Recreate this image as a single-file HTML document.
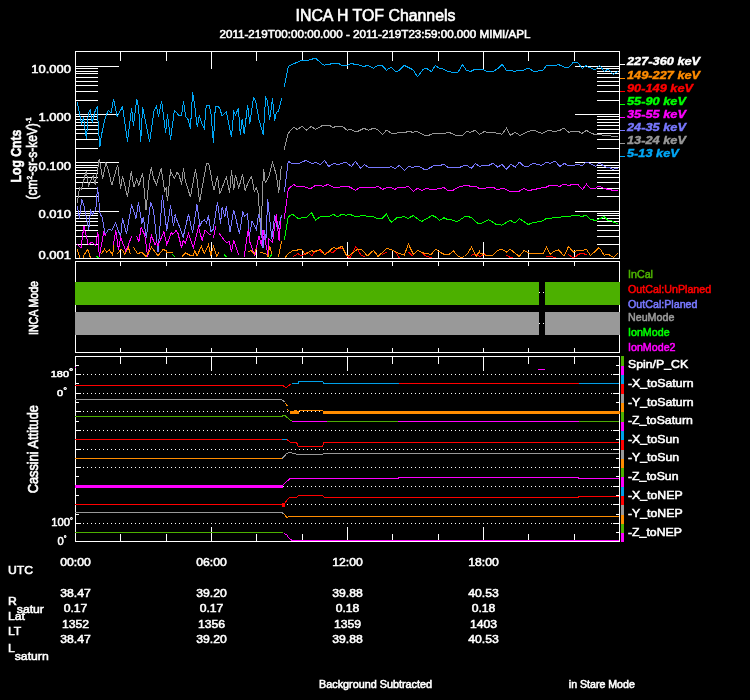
<!DOCTYPE html>
<html><head><meta charset="utf-8"><title>INCA H TOF Channels</title>
<style>
html,body{margin:0;padding:0;background:#000;}
svg{display:block;font-family:"Liberation Sans",sans-serif;will-change:transform;}
text{fill:#fff;stroke:#fff;stroke-width:0.55px;}
.l{fill:none;stroke-width:1;shape-rendering:crispEdges;}
.w{stroke:#fff;stroke-width:1;shape-rendering:crispEdges;fill:none;}
</style></head><body>
<svg width="750" height="700" viewBox="0 0 750 700">
<rect width="750" height="700" fill="#000"/>
<text x="375.5" y="20.7" text-anchor="middle" font-size="15.6" textLength="160" lengthAdjust="spacingAndGlyphs" style="stroke-width:0.6px">INCA H TOF Channels</text>
<text x="375" y="37.9" text-anchor="middle" font-size="10.8" textLength="311" lengthAdjust="spacingAndGlyphs">2011-219T00:00:00.000 - 2011-219T23:59:00.000 MIMI/APL</text>
<path class="w" d="M76 66.5H119M575 66.5H619M76 100.5H98M597 100.5H619M76 91.5H98M597 91.5H619M76 85.5H98M597 85.5H619M76 81.5H98M597 81.5H619M76 77.5H98M597 77.5H619M76 73.5H98M597 73.5H619M76 71.5H98M597 71.5H619M76 68.5H98M597 68.5H619M76 114.5H119M575 114.5H619M76 148.5H98M597 148.5H619M76 139.5H98M597 139.5H619M76 133.5H98M597 133.5H619M76 129.5H98M597 129.5H619M76 125.5H98M597 125.5H619M76 122.5H98M597 122.5H619M76 119.5H98M597 119.5H619M76 116.5H98M597 116.5H619M76 162.5H119M575 162.5H619M76 196.5H98M597 196.5H619M76 188.5H98M597 188.5H619M76 182.5H98M597 182.5H619M76 177.5H98M597 177.5H619M76 173.5H98M597 173.5H619M76 170.5H98M597 170.5H619M76 167.5H98M597 167.5H619M76 165.5H98M597 165.5H619M76 211.5H119M575 211.5H619M76 244.5H98M597 244.5H619M76 236.5H98M597 236.5H619M76 230.5H98M597 230.5H619M76 225.5H98M597 225.5H619M76 221.5H98M597 221.5H619M76 218.5H98M597 218.5H619M76 215.5H98M597 215.5H619M76 213.5H98M597 213.5H619M120.5 51V61M120.5 259V250M166.5 51V61M166.5 259V250M211.5 51V69M211.5 259V242M256.5 51V61M256.5 259V250M302.5 51V61M302.5 259V250M347.5 51V69M347.5 259V242M392.5 51V61M392.5 259V250M438.5 51V61M438.5 259V250M483.5 51V69M483.5 259V242M528.5 51V61M528.5 259V250M574.5 51V61M574.5 259V250"/>
<clipPath id="c1"><rect x="76" y="52" width="543" height="206"/></clipPath>
<g clip-path="url(#c1)">
<polyline class="l" stroke="#00a8f8" stroke-width="1" points="77.3,102.3 81.4,123.4 83.5,117.3 86.4,139.3 88.3,113.6 90.2,110.2 92.3,122.4 95.2,110.7 97.1,107.3 99.8,147.3 101.5,134.9 105.2,118.0 108.4,110.2 111.1,112.9 113.6,99.2 117.2,117.0 120.6,110.2 122.5,106.7 127.5,141.5 131.6,108.5 133.4,126.1 136.7,99.2 138.6,107.0 140.7,141.5 142.6,107.0 149.6,141.5 153.9,111.4 156.5,106.3 158.4,116.5 161.7,101.1 165.6,132.7 167.5,114.3 170.5,139.6 174.4,110.2 178.5,115.1 179.4,115.5 181.6,115.1 183.5,101.1 185.6,116.5 188.5,120.2 190.4,129.0 192.6,92.0 194.5,104.1 197.3,127.2 199.2,115.8 202.1,123.9 204.3,128.3 206.2,105.5 209.0,105.5 210.9,112.9 213.4,142.9 215.3,107.0 217.8,106.3 219.7,108.5 222.2,116.1 226.3,111.7 231.5,137.1 233.7,111.7 235.4,115.1 238.4,108.5 240.3,134.9 242.2,118.7 244.2,134.1 247.6,104.8 249.8,123.9 253.5,97.5 255.7,101.1 258.9,119.5 263.3,134.9 265.6,97.5 267.4,100.4 269.6,120.2 272.5,98.5 274.7,120.9 276.5,112.1 278.4,111.4 281.6,98.2"/>
<polyline class="l" stroke="#00a8f8" stroke-width="1" points="284.2,87.4 288.3,66.4 292.0,64.4 295.7,62.9 299.3,61.4 302.3,60.3 308.4,60.3 309.6,59.5 312.5,59.1 314.0,58.1 315.8,58.5 318.4,60.6 322.1,63.9 324.3,65.4 326.5,64.4 330.1,64.4 331.6,63.2 338.2,63.2 341.9,65.4 347.0,65.4 350.7,63.5 352.9,63.5 353.6,64.4 357.3,64.4 358.7,65.0 360.9,65.3 362.4,66.1 365.3,66.1 366.8,65.4 368.3,65.4 373.4,68.3 375.6,66.4 377.9,65.8 382.0,65.3 384.1,67.6 386.4,70.2 391.1,67.3 395.5,71.7 399.2,70.5 404.3,65.3 408.0,67.3 413.1,69.8 417.5,76.7 422.7,69.8 425.6,68.3 427.8,69.1 431.5,71.7 435.4,65.3 438.1,67.6 443.9,69.4 447.6,71.3 452.0,72.3 457.9,72.3 462.6,64.4 465.9,69.8 470.3,71.7 474.7,69.4 479.9,69.4 483.7,69.8 486.6,71.3 493.2,71.3 497.6,68.8 502.3,64.4 506.4,70.2 512.3,70.5 514.5,71.6 517.4,70.5 524.0,70.2 527.7,68.3 529.9,69.1 533.5,71.3 536.5,71.6 538.7,70.5 543.1,70.2 546.7,65.3 556.3,65.3 558.5,64.4 559.9,64.7 560.0,65.4 561.9,65.7 564.2,67.3 568.9,67.3 573.5,62.1 577.3,62.1 582.4,68.5 586.4,65.4 588.9,67.5 592.2,68.5 594.1,69.6 595.9,69.4 599.7,65.4 604.3,71.5 605.7,70.3 608.1,69.4 613.4,74.5 616.0,72.4 618.3,71.7"/>
<polyline class="l" stroke="#989898" stroke-width="1" points="77.3,202.8 79.5,187.4 81.4,189.6 83.5,181.5 86.1,171.3 88.8,185.9 91.3,179.3 93.2,176.1 95.2,184.5 97.1,172.3 99.3,158.8 102.6,178.6 105.9,162.5 108.4,169.8 111.8,185.2 114.7,174.9 117.7,164.7 120.6,188.9 122.5,175.7 127.5,196.9 131.3,171.3 133.8,187.4 136.7,179.3 138.9,185.2 142.6,172.7 146.0,210.1 149.2,177.9 151.4,167.6 153.6,178.6 156.5,184.5 161.2,168.3 164.6,191.1 166.1,188.1 167.5,201.3 170.5,170.5 174.1,178.6 177.8,172.0 176.5,172.0 178.7,173.5 181.6,184.5 183.5,168.3 185.3,180.8 190.4,196.9 195.5,169.1 197.0,179.3 199.6,202.1 206.5,163.2 208.7,163.5 213.9,190.3 217.5,175.7 219.7,194.0 226.3,177.1 229.6,192.5 231.5,170.5 233.7,190.3 235.4,174.9 238.8,188.1 242.5,174.2 245.1,190.3 248.3,182.3 251.6,176.4 254.2,191.1 256.4,188.1 258.3,194.0 260.8,235.4 263.0,181.5 263.7,169.1 265.2,183.0 268.9,176.4 272.5,162.5 276.2,174.2 278.8,192.5 281.3,166.1"/>
<polyline class="l" stroke="#989898" stroke-width="1" points="284.2,149.6 288.3,133.2 293.5,127.3 297.1,129.4 302.3,126.4 306.4,130.2 311.4,126.4 315.5,129.4 322.8,125.3 329.4,125.3 333.1,127.6 336.0,126.4 342.6,126.4 347.0,130.2 350.7,129.4 355.1,131.6 358.0,131.3 363.9,128.3 368.3,130.2 373.4,128.3 377.1,129.4 377.6,129.4 382.6,134.6 386.4,130.2 391.9,133.5 396.3,133.5 398.5,132.3 405.8,132.3 408.0,131.3 410.2,131.6 412.4,132.3 416.8,131.3 424.9,135.5 428.5,135.5 433.7,133.2 445.4,133.2 447.6,132.3 449.8,132.6 455.7,135.5 462.7,135.5 466.7,131.6 470.3,132.3 475.5,130.2 479.4,134.2 484.4,131.6 486.6,132.3 493.9,132.3 496.9,133.5 502.0,134.2 506.4,128.3 510.4,135.2 515.2,132.3 519.9,135.5 527.7,131.6 533.5,130.2 542.3,133.5 548.9,130.2 554.8,131.6 559.9,130.2 560.0,130.3 563.7,128.2 568.9,132.4 571.2,131.5 578.7,131.5 581.9,133.5 586.4,130.3 589.4,132.4 592.2,133.3 594.5,134.5 601.5,134.5 602.5,135.4 610.4,135.4 611.3,136.4 617.9,136.4"/>
<polyline class="l" stroke="#7878ff" stroke-width="1" points="77.3,206.0 79.5,218.5 81.7,199.4 83.9,205.3 88.8,229.5 90.5,210.4 92.3,214.1 95.7,210.4 97.6,187.4 100.1,214.1 102.3,217.7 105.2,234.6 108.4,229.5 111.8,230.2 115.5,222.9 120.6,236.8 122.5,217.7 126.5,233.9 131.6,204.5 136.0,218.5 138.5,202.3 141.9,223.6 143.3,217.0 146.3,237.5 150.7,201.6 153.6,211.1 158.0,252.2 162.4,195.0 166.8,230.9 170.5,205.3 173.4,225.8 175.6,214.1 175.0,215.5 179.4,226.5 183.1,237.5 188.5,214.1 192.6,233.1 197.0,204.5 199.9,225.8 202.1,221.4 204.3,219.9 206.5,222.9 208.4,215.5 210.9,231.7 213.1,229.5 217.5,202.3 220.5,223.6 222.2,206.7 224.9,217.0 226.3,206.0 230.0,231.7 233.7,209.7 239.5,233.9 242.8,211.9 244.7,216.3 247.6,213.3 249.1,236.8 252.0,221.4 256.4,229.5 258.6,214.1 260.1,218.5 263.0,247.8 264.5,230.2 265.9,240.5 267.7,199.4 271.8,239.0 274.7,215.5 277.7,230.2 279.9,221.4 281.6,215.5"/>
<polyline class="l" stroke="#7878ff" stroke-width="1" points="284.4,191.7 288.3,161.3 292.0,163.5 299.3,163.5 305.9,160.3 311.8,163.5 315.5,162.5 320.6,164.6 324.6,160.3 328.7,166.5 333.8,163.5 338.2,164.6 345.5,162.1 351.4,166.5 355.4,161.3 360.6,168.4 364.6,164.6 368.6,167.5 388.9,167.5 391.1,166.2 394.8,168.7 399.2,165.4 404.3,170.4 408.7,166.2 412.4,167.5 416.8,166.2 419.0,166.5 424.1,169.4 427.1,169.4 434.4,165.4 440.3,165.4 443.9,164.3 448.3,167.5 459.3,167.5 464.5,165.4 466.7,165.4 471.4,168.4 475.5,163.5 479.4,166.5 482.2,165.4 488.8,165.4 493.2,163.1 497.6,167.2 502.0,164.3 506.4,169.4 510.8,164.3 515.2,167.2 519.3,162.1 524.0,166.2 528.4,166.2 533.5,163.1 537.2,164.3 541.6,165.4 546.7,162.1 550.4,163.5 555.1,161.0 559.9,166.5 561.9,165.1 564.5,163.4 567.5,165.5 574.5,165.5 575.4,164.4 579.6,164.4 580.5,165.5 582.4,165.5 584.7,163.2 587.1,162.5 589.9,163.4 592.2,164.4 595.5,166.5 597.3,164.4 599.7,163.4 601.5,164.4 603.4,165.5 604.8,166.5 606.7,167.4 609.5,167.4 610.9,168.3 613.2,169.5 616.0,168.3 617.9,168.3"/>
<polyline class="l" stroke="#ff00ff" stroke-width="1" points="77.3,244.1 81.0,247.8 83.9,225.8 88.3,244.9 92.0,241.9 95.7,245.6 97.9,231.7 99.3,256.6 103.7,232.4 105.9,236.1"/>
<polyline class="l" stroke="#ff00ff" stroke-width="1" points="113.3,244.9 115.8,230.2 118.4,250.0 120.6,237.5 125.7,250.7 127.9,246.3 131.6,236.1"/>
<polyline class="l" stroke="#ff00ff" stroke-width="1" points="136.7,236.1 138.9,241.9 141.1,227.3 144.8,235.3 147.7,256.6 151.4,235.3 155.1,244.9 156.5,241.9 158.0,245.6 163.9,231.7 166.8,244.9 171.2,232.4 172.7,234.6 176.3,230.2 175.0,230.2 177.9,233.1 181.6,247.8 183.1,240.5 185.3,242.7 188.5,233.9 193.3,247.8 198.5,227.3 202.1,240.5 205.1,230.2 209.5,234.6 210.9,233.9"/>
<polyline class="l" stroke="#ff00ff" stroke-width="1" points="213.4,237.5 215.8,226.5"/>
<polyline class="l" stroke="#ff00ff" stroke-width="1" points="219.0,233.1 226.3,242.7 229.3,241.2 231.5,252.2 233.7,239.7 238.8,255.1"/>
<polyline class="l" stroke="#ff00ff" stroke-width="1" points="244.2,256.6 248.3,228.7 249.8,241.9 254.9,255.9 258.9,236.1 261.5,245.6 263.0,230.2 268.1,255.9 268.9,239.0 272.5,242.7 276.2,214.1 279.1,240.5 280.6,220.7"/>
<polyline class="l" stroke="#ff00ff" stroke-width="1" points="284.2,219.1 288.3,189.1 293.5,184.4 296.4,186.4 303.7,186.4 310.3,188.8 315.5,185.4 320.6,185.4 323.5,186.4 327.9,184.4 333.8,187.6 338.9,187.6 341.1,186.4 348.5,186.4 355.4,190.2 360.6,187.3 374.9,187.3 377.8,186.4 377.9,186.4 382.6,189.4 386.7,187.6 390.4,187.3 394.8,189.4 398.5,187.3 405.1,187.3 408.0,186.1 413.4,191.3 417.5,188.3 421.9,190.5 426.3,188.3 430.0,189.4 435.9,189.4 438.1,188.3 441.0,188.3 443.6,187.3 447.6,190.2 452.7,190.5 457.9,187.3 461.5,186.4 465.2,185.3 468.1,185.3 470.3,186.4 475.5,186.4 479.1,188.3 485.1,188.3 487.3,187.3 493.2,187.3 496.9,189.4 499.1,189.4 501.3,188.3 503.5,188.3 509.3,191.3 518.9,191.3 524.0,188.3 527.7,190.5 530.6,190.5 532.8,189.4 535.7,189.4 537.9,188.3 540.1,188.3 542.3,187.3 546.0,187.3 549.7,185.3 556.3,185.3 558.5,186.1 559.9,186.1 560.0,186.3 563.4,184.2 566.1,184.2 567.5,185.2 570.2,185.2 572.2,184.2 577.6,184.2 582.4,189.7 586.5,184.2 590.5,188.3 595.5,188.3 597.3,187.0 600.0,186.3 603.4,188.3 606.1,188.3 606.8,189.3 610.9,189.3 611.6,190.3 617.7,190.3"/>
<polyline class="l" stroke="#00ff00" stroke-width="1" points="96.4,255.9 98.6,258.1"/>
<polyline class="l" stroke="#00ff00" stroke-width="1" points="141.9,252.9 145.5,255.1"/>
<polyline class="l" stroke="#00ff00" stroke-width="1" points="171.9,253.7 174.9,256.6"/>
<polyline class="l" stroke="#00ff00" stroke-width="1" points="224.1,254.8 226.6,257.3"/>
<polyline class="l" stroke="#00ff00" stroke-width="1" points="268.9,258.1 272.1,254.4"/>
<polyline class="l" stroke="#00ff00" stroke-width="1" points="284.2,240.4 288.3,216.6 292.7,214.3 297.9,218.4 306.7,217.2 311.5,212.5 315.5,220.3 320.6,216.6 329.4,216.6 333.1,214.3 337.5,216.6 341.9,214.3 346.3,215.2 349.9,214.3 355.1,216.6 358.0,216.6 360.2,215.8 365.3,215.8 367.5,216.6 373.4,216.6 377.1,218.4 382.3,218.4 386.4,214.3 391.1,222.4 397.0,217.7 400.7,217.7 403.6,216.2 408.0,218.4 413.4,215.5 419.0,219.9 421.9,221.3 432.2,215.5 435.1,216.6 439.5,220.3 443.9,217.7 447.6,219.6 451.3,219.6 455.7,221.3 457.9,221.3 464.5,216.9 468.1,216.6 471.8,217.7 475.5,221.6 478.4,223.5 481.3,223.5 483.5,222.4 482.2,223.1 488.5,219.6 496.1,224.3 499.1,224.3 501.7,225.4 510.1,220.3 515.2,223.1 519.3,218.4 528.4,224.6 533.5,222.1 536.5,222.1 538.7,221.3 541.6,221.3 546.7,218.4 550.4,218.4 554.1,217.2 559.9,217.2 560.0,217.5 562.7,216.5 570.2,216.5 572.2,215.4 579.0,215.4 580.3,216.5 583.1,216.5 584.4,215.4 586.5,215.4 590.5,219.5 593.2,219.5 593.9,220.5 596.6,220.5 598.0,219.5 600.7,218.4 604.1,216.5 608.2,220.5 610.9,220.5 614.3,222.5 617.7,223.6"/>
<polyline class="l" stroke="#ff0000" stroke-width="1" points="293.5,256.5 297.9,253.6 301.5,255.8 305.2,253.6 308.1,252.1 311.8,255.8 315.5,250.4 319.9,250.4 324.3,254.3 329.4,251.1 332.3,252.9 337.5,248.5 342.6,248.5 346.3,254.3 349.9,258.7 355.8,246.3 358.0,249.9 360.9,255.1 364.6,256.5"/>
<polyline class="l" stroke="#ff0000" stroke-width="1" points="381.6,255.1 386.4,252.1"/>
<polyline class="l" stroke="#ff0000" stroke-width="1" points="394.8,250.4 399.2,257.7"/>
<polyline class="l" stroke="#ff0000" stroke-width="1" points="408.4,252.1 413.4,256.5"/>
<polyline class="l" stroke="#ff0000" stroke-width="1" points="421.9,252.9 425.6,255.8 431.5,257.7"/>
<polyline class="l" stroke="#ff0000" stroke-width="1" points="471.1,255.1 475.5,254.3 479.9,256.5 485.0,254.3 484.1,253.6"/>
<polyline class="l" stroke="#ff0000" stroke-width="1" points="506.4,255.1 510.1,257.3 515.2,258.4"/>
<polyline class="l" stroke="#ff0000" stroke-width="1" points="546.0,256.2 551.9,256.5 555.5,257.7"/>
<polyline class="l" stroke="#ff0000" stroke-width="1" points="568.0,254.3 573.9,258.0 577.5,255.1 581.2,253.6 586.6,254.3"/>
<polyline class="l" stroke="#ff0000" stroke-width="1" points="568.1,254.1 573.6,258.2 577.6,254.4 581.7,253.4 586.5,254.4"/>
<polyline class="l" stroke="#ff8c00" stroke-width="1" points="77.3,249.3 80.0,258.4"/>
<polyline class="l" stroke="#ff8c00" stroke-width="1" points="83.5,258.4 83.9,255.1 87.9,249.3 90.5,258.1"/>
<polyline class="l" stroke="#ff8c00" stroke-width="1" points="101.5,253.7 104.5,249.3 106.7,252.2 109.6,250.0 112.5,255.1 114.0,244.9"/>
<polyline class="l" stroke="#ff8c00" stroke-width="1" points="117.7,253.7 120.6,249.3 122.8,250.7 125.0,254.4 128.4,247.1 130.1,253.7"/>
<polyline class="l" stroke="#ff8c00" stroke-width="1" points="133.4,247.1 137.5,253.7 141.9,252.2 146.3,256.6 151.4,247.1 158.0,255.9 163.1,249.3 166.1,250.7 166.8,252.2 172.7,252.2"/>
<polyline class="l" stroke="#ff8c00" stroke-width="1" points="181.6,257.3 185.3,252.9 189.7,255.1 193.3,255.1 194.8,250.7 197.0,255.9 201.4,246.3 204.3,253.7 208.4,244.9 210.9,255.1 213.4,246.3 216.8,256.6 219.0,252.2"/>
<polyline class="l" stroke="#ff8c00" stroke-width="1" points="247.6,251.5 251.3,250.7 254.2,254.4 256.4,247.8"/>
<polyline class="l" stroke="#ff8c00" stroke-width="1" points="260.1,252.2 265.9,253.7 268.1,256.6 269.6,245.6 271.8,253.7"/>
<polyline class="l" stroke="#ff8c00" stroke-width="1" points="278.4,257.3 281.6,241.2"/>
<polyline class="l" stroke="#ff8c00" stroke-width="1" points="284.2,258.7 288.3,253.6 292.0,251.1 301.5,249.2 305.2,254.3 311.8,250.4 314.0,252.1 320.6,249.2 325.0,255.1 329.4,251.1 333.8,247.0 336.0,249.2 341.9,246.3 346.3,255.1 349.9,255.1 356.5,249.9 361.7,249.9 367.5,255.8 373.4,250.4 378.5,256.5 377.9,256.5 386.7,248.5 390.4,249.2 399.2,253.6 404.3,255.1 408.4,244.1 413.4,254.3 417.5,250.4 424.9,253.6 431.5,254.3 435.4,249.2 442.5,253.6 445.4,254.8 448.3,254.8 453.5,251.1 458.6,256.5 461.5,257.7 464.5,256.5 468.1,252.9 471.5,247.0 476.2,256.5 479.4,251.1 480.0,252.9 485.1,255.1 493.2,255.1 497.6,250.4 502.0,249.2 506.4,252.1 510.1,249.2 519.3,256.5 524.0,250.4 528.4,252.9 531.3,253.6 543.1,253.6 546.4,247.0 550.4,254.3 554.1,251.4 558.5,249.9 560.0,251.4 564.1,256.1 568.4,246.6 573.6,252.1 576.3,250.7 583.7,250.7 584.4,249.4 586.5,249.4 590.5,255.5 598.7,248.0 600.0,248.7 604.1,255.2 608.2,254.1 613.6,257.5 617.7,253.2"/>
</g>
<rect class="w" x="75.5" y="51.5" width="544" height="207"/>
<text transform="translate(71,73) scale(1.12,1.0)" font-size="11.6" text-anchor="end">10.000</text>
<text transform="translate(71,121.4) scale(1.12,1.0)" font-size="11.6" text-anchor="end">1.000</text>
<text transform="translate(71,170) scale(1.12,1.0)" font-size="11.6" text-anchor="end">0.100</text>
<text transform="translate(71,218) scale(1.12,1.0)" font-size="11.6" text-anchor="end">0.010</text>
<text transform="translate(71,259) scale(1.12,1.0)" font-size="11.6" text-anchor="end">0.001</text>
<text transform="translate(20.9,156.1) rotate(-90) scale(1.0,1.17)" font-size="12.2" text-anchor="middle" font-weight="bold" style="stroke-width:0.5px">Log Cnts</text>
<text transform="translate(37.1,199.4) rotate(-90) scale(1.0,1.17)" font-size="12">(cm<tspan font-size="6.5" dy="-4.5">2</tspan><tspan dy="4.5">-sr-s-keV)</tspan><tspan font-size="6.5" dy="-5.5">-1</tspan></text>
<line class="l" x1="620" y1="64.5" x2="625" y2="64.5" stroke="#ffffff"/>
<text transform="translate(627,64.7) scale(1.195,1.0)" font-size="10.7" font-weight="bold" font-style="italic" style="fill:#ffffff;stroke:#ffffff;stroke-width:0.4px">227-360 keV</text>
<line class="l" x1="620" y1="78.5" x2="625" y2="78.5" stroke="#ff8c00"/>
<text transform="translate(627,78.7) scale(1.195,1.0)" font-size="10.7" font-weight="bold" font-style="italic" style="fill:#ff8c00;stroke:#ff8c00;stroke-width:0.4px">149-227 keV</text>
<line class="l" x1="620" y1="91.5" x2="625" y2="91.5" stroke="#ff0000"/>
<text transform="translate(627,91.7) scale(1.195,1.0)" font-size="10.7" font-weight="bold" font-style="italic" style="fill:#ff0000;stroke:#ff0000;stroke-width:0.4px">90-149 keV</text>
<line class="l" x1="620" y1="104.5" x2="625" y2="104.5" stroke="#00ff00"/>
<text transform="translate(627,104.7) scale(1.195,1.0)" font-size="10.7" font-weight="bold" font-style="italic" style="fill:#00ff00;stroke:#00ff00;stroke-width:0.4px">55-90 keV</text>
<line class="l" x1="620" y1="117.5" x2="625" y2="117.5" stroke="#ff00ff"/>
<text transform="translate(627,117.7) scale(1.195,1.0)" font-size="10.7" font-weight="bold" font-style="italic" style="fill:#ff00ff;stroke:#ff00ff;stroke-width:0.4px">35-55 keV</text>
<line class="l" x1="620" y1="130.5" x2="625" y2="130.5" stroke="#7878ff"/>
<text transform="translate(627,130.7) scale(1.195,1.0)" font-size="10.7" font-weight="bold" font-style="italic" style="fill:#7878ff;stroke:#7878ff;stroke-width:0.4px">24-35 keV</text>
<line class="l" x1="620" y1="143.5" x2="625" y2="143.5" stroke="#989898"/>
<text transform="translate(627,143.7) scale(1.195,1.0)" font-size="10.7" font-weight="bold" font-style="italic" style="fill:#989898;stroke:#989898;stroke-width:0.4px">13-24 keV</text>
<line class="l" x1="620" y1="156.5" x2="625" y2="156.5" stroke="#00a8f8"/>
<text transform="translate(627,156.7) scale(1.195,1.0)" font-size="10.7" font-weight="bold" font-style="italic" style="fill:#00a8f8;stroke:#00a8f8;stroke-width:0.4px">5-13 keV</text>
<path class="w" d="M120.5 261V266M120.5 353V348M166.5 261V266M166.5 353V348M211.5 261V266M211.5 353V348M256.5 261V266M256.5 353V348M302.5 261V266M302.5 353V348M347.5 261V266M347.5 353V348M392.5 261V266M392.5 353V348M438.5 261V266M438.5 353V348M483.5 261V266M483.5 353V348M528.5 261V266M528.5 353V348M574.5 261V266M574.5 353V348"/>
<rect class="w" x="75.5" y="261.5" width="544" height="91"/>
<rect x="75" y="282" width="464" height="23" fill="#4cb000" shape-rendering="crispEdges"/><rect x="545" y="282" width="75" height="23" fill="#4cb000" shape-rendering="crispEdges"/>
<rect x="75" y="312" width="464" height="23" fill="#999999" shape-rendering="crispEdges"/><rect x="545" y="312" width="75" height="23" fill="#999999" shape-rendering="crispEdges"/>
<path fill="#fff" shape-rendering="crispEdges" d="M539 292h1v1h-1zM543 292h1v1h-1zM539 323h1v1h-1zM543 323h1v1h-1z"/>
<text transform="translate(38.3,308) rotate(-90) scale(1.0,1.18)" font-size="10.56" text-anchor="middle">INCA Mode</text>
<text x="628" y="277.8" font-size="10.7" style="fill:#4cb000;stroke:#4cb000">InCal</text>
<text x="628" y="292.8" font-size="10.7" style="fill:#ff0000;stroke:#ff0000">OutCal:UnPlaned</text>
<text x="628" y="308.1" font-size="10.7" style="fill:#7878ff;stroke:#7878ff">OutCal:Planed</text>
<text x="628" y="320.5" font-size="10.7" style="fill:#999999;stroke:#999999">NeuMode</text>
<text x="628" y="335.6" font-size="10.7" style="fill:#00ff00;stroke:#00ff00">IonMode</text>
<text x="628" y="350.8" font-size="10.7" style="fill:#ff00ff;stroke:#ff00ff">IonMode2</text>
<path class="w" d="M120.5 356V364M120.5 542V534M166.5 356V364M166.5 542V534M211.5 356V371M211.5 542V527M256.5 356V364M256.5 542V534M302.5 356V364M302.5 542V534M347.5 356V371M347.5 542V527M392.5 356V364M392.5 542V534M438.5 356V364M438.5 542V534M483.5 356V371M483.5 542V527M528.5 356V364M528.5 542V534M574.5 356V364M574.5 542V534M76 374.5H81M613 374.5H619M76 393.5H81M613 393.5H619M76 411.5H81M613 411.5H619M76 430.5H81M613 430.5H619M76 449.5H81M613 449.5H619M76 467.5H81M613 467.5H619M76 486.5H81M613 486.5H619M76 504.5H81M613 504.5H619M76 523.5H81M613 523.5H619M76 365.5H79M616 365.5H619M76 383.5H79M616 383.5H619M76 402.5H79M616 402.5H619M76 421.5H79M616 421.5H619M76 439.5H79M616 439.5H619M76 458.5H79M616 458.5H619M76 476.5H79M616 476.5H619M76 495.5H79M616 495.5H619M76 514.5H79M616 514.5H619M76 532.5H79M616 532.5H619"/>
<line class="w" x1="83" y1="374.5" x2="612" y2="374.5" stroke-dasharray="1 3"/><line class="w" x1="83" y1="393.5" x2="612" y2="393.5" stroke-dasharray="1 3"/><line class="w" x1="83" y1="411.5" x2="612" y2="411.5" stroke-dasharray="1 3"/><line class="w" x1="83" y1="430.5" x2="612" y2="430.5" stroke-dasharray="1 3"/><line class="w" x1="83" y1="449.5" x2="612" y2="449.5" stroke-dasharray="1 3"/><line class="w" x1="83" y1="467.5" x2="612" y2="467.5" stroke-dasharray="1 3"/><line class="w" x1="83" y1="486.5" x2="612" y2="486.5" stroke-dasharray="1 3"/><line class="w" x1="83" y1="504.5" x2="612" y2="504.5" stroke-dasharray="1 3"/><line class="w" x1="83" y1="523.5" x2="612" y2="523.5" stroke-dasharray="1 3"/>
<rect class="w" x="75.5" y="356.5" width="544" height="185"/>
<rect x="75" y="367" width="1" height="1" fill="#ff00ff"/><polyline class="l" stroke="#ff00ff" stroke-width="1" points="538,369.5 545,369.5"/>
<polyline class="l" stroke="#ff0000" stroke-width="1" points="75,385.5 282.8,385.5 286,387.5 290.8,384.2"/>
<polyline class="l" stroke="#00a0e8" stroke-width="1" points="292,383.5 298.3,383.5 299,381.5 322.5,381.5 323.7,383.5 399,383.5"/>
<polyline class="l" stroke="#ff0000" stroke-width="1" points="399,383.5 579,383.5"/>
<polyline class="l" stroke="#00a0e8" stroke-width="1" points="579,383.5 619,383.5"/>
<polyline class="l" stroke="#999999" stroke-width="1" points="75,399.5 281.4,399.5 284.8,402"/>
<polyline class="l" stroke="#ff8c00" stroke-width="1" points="285.2,403.1 287.7,406.3"/>
<polyline class="l" stroke="#ff8c00" stroke-width="1" points="287.3,409.6 289.2,410.4"/>
<rect x="290" y="411" width="9" height="3" fill="#ff8c00" shape-rendering="crispEdges"/><rect x="294" y="410" width="3" height="1" fill="#ff8c00" shape-rendering="crispEdges"/><polyline class="l" stroke="#ff8c00" stroke-width="1" points="298.7,410.5 323,410.5"/>
<rect x="323" y="411" width="297" height="3" fill="#ff8c00" shape-rendering="crispEdges"/>
<polyline class="l" stroke="#4cb000" stroke-width="1" points="75,416.5 281.9,416.5 283.3,415.3 285.5,416 291.4,421"/>
<polyline class="l" stroke="#ff00ff" stroke-width="1" points="292,421.5 327,421.5"/>
<polyline class="l" stroke="#4cb000" stroke-width="1" points="327,421.5 398,421.5"/>
<polyline class="l" stroke="#ff00ff" stroke-width="1" points="398,421.5 579,421.5"/>
<polyline class="l" stroke="#4cb000" stroke-width="1" points="579,421.5 619,421.5"/>
<polyline class="l" stroke="#ff0000" stroke-width="1" points="75,439.5 281.9,439.5"/>
<polyline class="l" stroke="#00a0e8" stroke-width="1" points="281.9,439.5 287,439.5"/>
<polyline class="l" stroke="#ff0000" stroke-width="1" points="287,439.5 290.7,442.5 296.5,442.5 298.4,446.5 322.5,446.5 323.7,442.5 619,442.5"/>
<polyline class="l" stroke="#ff8c00" stroke-width="1" points="75,458.5 282.3,458.5"/>
<polyline class="l" stroke="#999999" stroke-width="1" points="282.3,458.5 287,453.1 290.7,452.6 296.5,454.1 298.4,454.5 322.5,454.5 323.7,453.5 619,453.5"/>
<rect x="75" y="485" width="208" height="3" fill="#ff00ff" shape-rendering="crispEdges"/><polyline class="l" stroke="#ff00ff" stroke-width="1" points="282.9,485.3 289.9,478.5 398.8,478.5 398.8,477.5 578,477.5 578,478.5 619,478.5"/>
<polyline class="l" stroke="#ff0000" stroke-width="1" points="75,504.5 282.3,504.5"/>
<rect x="282" y="503" width="3" height="4" fill="#ff0000" shape-rendering="crispEdges"/><polyline class="l" stroke="#ff0000" stroke-width="1" points="284.8,503 288.5,498.1 296.5,497.3 298.4,495.5 322.5,495.5 324.4,497.5 578,497.5 578,496.5 619,496.5"/>
<polyline class="l" stroke="#999999" stroke-width="1" points="75,512.5 281.9,512.5 283.8,513.9"/>
<polyline class="l" stroke="#ff8c00" stroke-width="1" points="283.8,513.9 287,517.6 289.2,516.5 619,516.5"/>
<polyline class="l" stroke="#4cb000" stroke-width="1" points="75,532.5 282.9,532.5"/>
<polyline class="l" stroke="#ff00ff" stroke-width="1.3" points="283.8,533 287,535.2 288.5,537.7 292.1,540.5 619,540.5"/>
<rect x="621" y="356.0" width="3" height="10.0" fill="#4cb000" shape-rendering="crispEdges"/><rect x="621" y="366.0" width="3" height="9.0" fill="#ff00ff" shape-rendering="crispEdges"/><rect x="621" y="375.0" width="3" height="9.0" fill="#00a0e8" shape-rendering="crispEdges"/><rect x="621" y="384.0" width="3" height="10.0" fill="#ff0000" shape-rendering="crispEdges"/><rect x="621" y="394.0" width="3" height="9.0" fill="#999999" shape-rendering="crispEdges"/><rect x="621" y="403.0" width="3" height="9.0" fill="#ff8c00" shape-rendering="crispEdges"/><rect x="621" y="412.0" width="3" height="10.0" fill="#4cb000" shape-rendering="crispEdges"/><rect x="621" y="422.0" width="3" height="9.0" fill="#ff00ff" shape-rendering="crispEdges"/><rect x="621" y="431.0" width="3" height="9.0" fill="#00a0e8" shape-rendering="crispEdges"/><rect x="621" y="440.0" width="3" height="10.0" fill="#ff0000" shape-rendering="crispEdges"/><rect x="621" y="450.0" width="3" height="9.0" fill="#999999" shape-rendering="crispEdges"/><rect x="621" y="459.0" width="3" height="9.0" fill="#ff8c00" shape-rendering="crispEdges"/><rect x="621" y="468.0" width="3" height="9.0" fill="#4cb000" shape-rendering="crispEdges"/><rect x="621" y="477.0" width="3" height="10.0" fill="#ff00ff" shape-rendering="crispEdges"/><rect x="621" y="487.0" width="3" height="9.0" fill="#00a0e8" shape-rendering="crispEdges"/><rect x="621" y="496.0" width="3" height="9.0" fill="#ff0000" shape-rendering="crispEdges"/><rect x="621" y="505.0" width="3" height="10.0" fill="#999999" shape-rendering="crispEdges"/><rect x="621" y="515.0" width="3" height="9.0" fill="#ff8c00" shape-rendering="crispEdges"/><rect x="621" y="524.0" width="3" height="9.0" fill="#4cb000" shape-rendering="crispEdges"/><rect x="621" y="533.0" width="3" height="9.0" fill="#ff00ff" shape-rendering="crispEdges"/>
<text transform="translate(628,368.4) scale(1.06,1.0)" font-size="11.6">Spin/P_CK</text>
<text transform="translate(628,387.0) scale(1.06,1.0)" font-size="11.6">-X_toSaturn</text>
<text transform="translate(628,405.6) scale(1.06,1.0)" font-size="11.6">-Y_toSaturn</text>
<text transform="translate(628,424.2) scale(1.06,1.0)" font-size="11.6">-Z_toSaturn</text>
<text transform="translate(628,442.8) scale(1.06,1.0)" font-size="11.6">-X_toSun</text>
<text transform="translate(628,461.4) scale(1.06,1.0)" font-size="11.6">-Y_toSun</text>
<text transform="translate(628,480.0) scale(1.06,1.0)" font-size="11.6">-Z_toSun</text>
<text transform="translate(628,498.6) scale(1.06,1.0)" font-size="11.6">-X_toNEP</text>
<text transform="translate(628,517.2) scale(1.06,1.0)" font-size="11.6">-Y_toNEP</text>
<text transform="translate(628,535.8) scale(1.06,1.0)" font-size="11.6">-Z_toNEP</text>
<text transform="translate(62,376.8) scale(1.19,1.0)" font-size="9.2" text-anchor="middle">180<tspan font-size="9" dy="-2">°</tspan></text>
<text transform="translate(62,395.8) scale(1.19,1.0)" font-size="9.2" text-anchor="middle">0<tspan font-size="8" dy="-2.5">°</tspan></text>
<text transform="translate(62,526)" font-size="11.2" text-anchor="middle">100<tspan font-size="7" dy="-3.5">°</tspan></text>
<text transform="translate(62,544.5)" font-size="11.2" text-anchor="middle">0<tspan font-size="7" dy="-3.5">°</tspan></text>
<text transform="translate(38.4,449.2) rotate(-90) scale(1.0,1.15)" font-size="12.8" text-anchor="middle">Cassini Attitude</text>
<text transform="translate(75.5,566.0) scale(1.07,1.0)" font-size="11.4" text-anchor="middle">00:00</text>
<text transform="translate(211.5,566.0) scale(1.07,1.0)" font-size="11.4" text-anchor="middle">06:00</text>
<text transform="translate(347.5,566.0) scale(1.07,1.0)" font-size="11.4" text-anchor="middle">12:00</text>
<text transform="translate(483.5,566.0) scale(1.07,1.0)" font-size="11.4" text-anchor="middle">18:00</text>

<text transform="translate(75.5,596.6) scale(1.07,1.0)" font-size="11.4" text-anchor="middle">38.47</text>
<text transform="translate(211.5,596.6) scale(1.07,1.0)" font-size="11.4" text-anchor="middle">39.20</text>
<text transform="translate(347.5,596.6) scale(1.07,1.0)" font-size="11.4" text-anchor="middle">39.88</text>
<text transform="translate(483.5,596.6) scale(1.07,1.0)" font-size="11.4" text-anchor="middle">40.53</text>

<text transform="translate(75.5,612.2) scale(1.07,1.0)" font-size="11.4" text-anchor="middle">0.17</text>
<text transform="translate(211.5,612.2) scale(1.07,1.0)" font-size="11.4" text-anchor="middle">0.17</text>
<text transform="translate(347.5,612.2) scale(1.07,1.0)" font-size="11.4" text-anchor="middle">0.18</text>
<text transform="translate(483.5,612.2) scale(1.07,1.0)" font-size="11.4" text-anchor="middle">0.18</text>

<text transform="translate(75.5,627.7) scale(1.07,1.0)" font-size="11.4" text-anchor="middle">1352</text>
<text transform="translate(211.5,627.7) scale(1.07,1.0)" font-size="11.4" text-anchor="middle">1356</text>
<text transform="translate(347.5,627.7) scale(1.07,1.0)" font-size="11.4" text-anchor="middle">1359</text>
<text transform="translate(483.5,627.7) scale(1.07,1.0)" font-size="11.4" text-anchor="middle">1403</text>

<text transform="translate(75.5,643.4) scale(1.07,1.0)" font-size="11.4" text-anchor="middle">38.47</text>
<text transform="translate(211.5,643.4) scale(1.07,1.0)" font-size="11.4" text-anchor="middle">39.20</text>
<text transform="translate(347.5,643.4) scale(1.07,1.0)" font-size="11.4" text-anchor="middle">39.88</text>
<text transform="translate(483.5,643.4) scale(1.07,1.0)" font-size="11.4" text-anchor="middle">40.53</text>

<text transform="translate(8,573.5) scale(1.07,1.0)" font-size="11.4">UTC</text>
<text transform="translate(8,604.5) scale(1.07,1.0)" font-size="11.4">R<tspan dy="8.6">satur</tspan></text>
<text transform="translate(8,620.3) scale(1.07,1.0)" font-size="11.4">Lat</text>
<text transform="translate(8,635.2) scale(1.07,1.0)" font-size="11.4">LT</text>
<text transform="translate(8,651.5) scale(1.07,1.0)" font-size="11.4">L<tspan dy="8.7">saturn</tspan></text>
<text x="319" y="688.3" font-size="10.2" textLength="113" lengthAdjust="spacingAndGlyphs">Background Subtracted</text>
<text x="568.8" y="688.3" font-size="10.2" textLength="66" lengthAdjust="spacingAndGlyphs">in Stare Mode</text>
</svg>
</body></html>
